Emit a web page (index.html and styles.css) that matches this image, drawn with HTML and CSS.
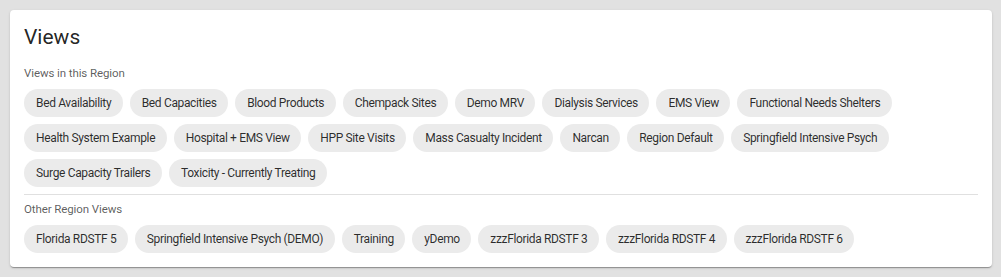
FILE: index.html
```html
<!DOCTYPE html>
<html lang="en">
    <head>
        <meta charset="utf-8">
        <meta name="viewport" content="width=device-width, initial-scale=1">
        <title>Views</title>
        <link rel="stylesheet" href="styles.css">
    </head>
    <body>
        <div class="card">
            <div class="card-title">Views</div>

            <div class="subheader">Views in this Region</div>
            <div class="chips">
                <span class="chip">Bed Availability</span>
                <span class="chip">Bed Capacities</span>
                <span class="chip">Blood Products</span>
                <span class="chip">Chempack Sites</span>
                <span class="chip">Demo MRV</span>
                <span class="chip">Dialysis Services</span>
                <span class="chip">EMS View</span>
                <span class="chip">Functional Needs Shelters</span>
                <span class="chip">Health System Example</span>
                <span class="chip">Hospital + EMS View</span>
                <span class="chip">HPP Site Visits</span>
                <span class="chip">Mass Casualty Incident</span>
                <span class="chip">Narcan</span>
                <span class="chip">Region Default</span>
                <span class="chip">Springfield Intensive Psych</span>
                <span class="chip">Surge Capacity Trailers</span>
                <span class="chip">Toxicity - Currently Treating</span>
            </div>

            <hr class="divider">

            <div class="subheader">Other Region Views</div>
            <div class="chips">
                <span class="chip">Florida RDSTF 5</span>
                <span class="chip">Springfield Intensive Psych (DEMO)</span>
                <span class="chip">Training</span>
                <span class="chip">yDemo</span>
                <span class="chip">zzzFlorida RDSTF 3</span>
                <span class="chip">zzzFlorida RDSTF 4</span>
                <span class="chip">zzzFlorida RDSTF 6</span>
            </div>
        </div>
    </body>
</html>
```

FILE: styles.css
```css
body {
    margin: 0;
    padding: 10px 9px 9px 10px;
    background-color: #e1e1e1;
    font-family: Roboto, "Liberation Sans", sans-serif;
}

.card {
    background-color: #fff;
    border-radius: 4px;
    padding: 13px 14px 14px 14px;
    box-shadow: 0 2px 1px -1px rgba(0, 0, 0, 0.2),
                0 1px 1px 0 rgba(0, 0, 0, 0.14),
                0 1px 3px 0 rgba(0, 0, 0, 0.12);
}

.card-title {
    font-size: 21px;
    line-height: 28px;
    color: rgba(0, 0, 0, 0.87);
}

.subheader {
    margin-top: 14px;
    font-size: 11.5px;
    line-height: 16px;
    letter-spacing: -0.1px;
    color: rgba(0, 0, 0, 0.65);
}

.chips {
    display: flex;
    flex-wrap: wrap;
    gap: 7px;
    margin-top: 8px;
}

.chip {
    display: inline-flex;
    align-items: center;
    height: 28px;
    padding: 0 11.5px 0 12px;
    border-radius: 14px;
    background-color: #ebebeb;
    font-size: 12px;
    letter-spacing: -0.35px;
    color: rgba(0, 0, 0, 0.82);
    white-space: nowrap;
}

.divider {
    margin: 7px 0 0 0;
    border: 0;
    border-top: 1px solid rgba(0, 0, 0, 0.12);
}

.divider + .subheader {
    margin-top: 6px;
}

.divider + .subheader + .chips {
    margin-top: 8px;
}
```
